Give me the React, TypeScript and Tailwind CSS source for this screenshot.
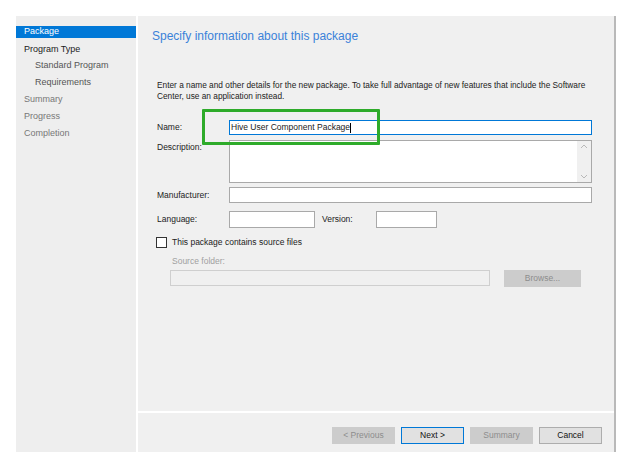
import React from "react";

const font = { fontFamily: '"Liberation Sans", Arial, sans-serif' };

function NavItem({ label, cls }: { label: string; cls: string }) {
  return <div className={`h-[16.8px] flex items-center ${cls}`}>{label}</div>;
}

function Btn({ label, disabled, primary }: { label: string; disabled?: boolean; primary?: boolean }) {
  return (
    <div
      className={`w-[63px] h-[17px] flex items-center justify-center text-[8.5px] border ${
        disabled
          ? "bg-[#cccccc] border-[#cccccc] text-[#8d8d8d]"
          : primary
          ? "bg-[#e1e1e1] border-[#0078d7] text-[#111]"
          : "bg-[#e1e1e1] border-[#adadad] text-[#111]"
      }`}
    >
      {label}
    </div>
  );
}

export default function App() {
  return (
    <div className="w-[629px] h-[452px] bg-white pt-4 pl-4 flex overflow-hidden" style={font}>
      {/* sidebar */}
      <div className="w-[120px] h-full bg-[#eeeeee] pt-[10px] text-[9px]">
        <div className="h-[12px] bg-[#0078d7] text-white pl-2 flex items-center mb-[3px]">Package</div>
        <div className="pl-2">
          <NavItem label="Program Type" cls="text-[#222]" />
          <NavItem label="Standard Program" cls="pl-[11px] text-[#555]" />
          <NavItem label="Requirements" cls="pl-[11px] text-[#555]" />
          <NavItem label="Summary" cls="text-[#777]" />
          <NavItem label="Progress" cls="text-[#777]" />
          <NavItem label="Completion" cls="text-[#777]" />
        </div>
      </div>
      <div className="w-[2px]" />
      {/* main */}
      <div className="w-[478px] h-full bg-[#f0f0f0] border-r-2 border-[#b9b9b9] flex flex-col">
        <div className="h-[395px] relative pl-[19px] pr-[22px]">
          <div className="pt-[12px] text-[12px] text-[#3b82d9] leading-[16px] ml-[-5px]">
            Specify information about this package
          </div>
          <div className="mt-[36px] text-[8.3px] leading-[11px] text-[#222] whitespace-nowrap">
            Enter a name and other details for the new package. To take full advantage of new features that include the Software
            <br />
            Center, use an application instead.
          </div>
          {/* Name */}
          <div className="mt-[18px] flex items-center h-[15px] text-[8.5px] text-[#222]">
            <div className="w-[72px]">Name:</div>
            <div className="flex-1 h-full border border-[#0078d7] bg-white flex items-center pl-[1px]">
              <span>Hive User Component Package</span>
              <span className="w-px h-[10px] bg-black" />
            </div>
          </div>
          {/* Description */}
          <div className="mt-[5px] flex items-start text-[8.5px] text-[#222]">
            <div className="w-[72px] pt-[1px]">Description:</div>
            <div className="flex-1 h-[43px] border border-[#a9a9a9] bg-white flex justify-end">
              <div className="w-[14px] h-full bg-[#f0f0f0] flex flex-col items-center justify-between py-[2px]">
                <svg width="8" height="6" viewBox="0 0 8 6"><path d="M1 5 L4 2 L7 5" fill="none" stroke="#b8b8b8" strokeWidth="1" /></svg>
                <svg width="8" height="6" viewBox="0 0 8 6"><path d="M1 1 L4 4 L7 1" fill="none" stroke="#b8b8b8" strokeWidth="1" /></svg>
              </div>
            </div>
          </div>
          {/* Manufacturer */}
          <div className="mt-[4px] flex items-center h-[16px] text-[8.5px] text-[#222]">
            <div className="w-[72px]">Manufacturer:</div>
            <div className="flex-1 h-full border border-[#a9a9a9] bg-white" />
          </div>
          {/* Language / Version */}
          <div className="mt-[8px] flex items-center h-[17px] text-[8.5px] text-[#222]">
            <div className="w-[72px]">Language:</div>
            <div className="w-[86px] h-full border border-[#a9a9a9] bg-white" />
            <div className="w-[61px] pl-[7px]">Version:</div>
            <div className="w-[61px] h-full border border-[#a9a9a9] bg-white" />
          </div>
          {/* checkbox */}
          <div className="mt-[8px] flex items-center h-[12px] text-[8.5px] text-[#222]">
            <div className="w-[11px] h-[11px] border border-[#333] bg-white ml-[-1px]" />
            <div className="ml-[5px]">This package contains source files</div>
          </div>
          <div className="mt-[8px] ml-[15px] text-[8.5px] text-[#a0a0a0] h-[11px] leading-[11px]">Source folder:</div>
          <div className="mt-[3px] ml-[13px] flex items-center h-[16px]">
            <div className="w-[320px] h-full border border-[#cfcfcf] bg-[#f0f0f0]" />
            <div className="ml-[14px] w-[77px] h-[17px] bg-[#cccccc] text-[#8d8d8d] text-[8.5px] flex items-center justify-center">
              Browse...
            </div>
          </div>
          {/* green highlight */}
          <div className="absolute left-[64px] top-[93px] w-[178px] h-[36px] border-[3px] border-[#2eab2a] rounded-[1px]" />
        </div>
        <div className="h-[2px] bg-white" />
        <div className="flex-1 flex justify-end items-start pt-[14px] pr-[12px] gap-[6px]">
          <Btn label="< Previous" disabled />
          <Btn label="Next >" primary />
          <Btn label="Summary" disabled />
          <Btn label="Cancel" />
        </div>
      </div>
    </div>
  );
}
